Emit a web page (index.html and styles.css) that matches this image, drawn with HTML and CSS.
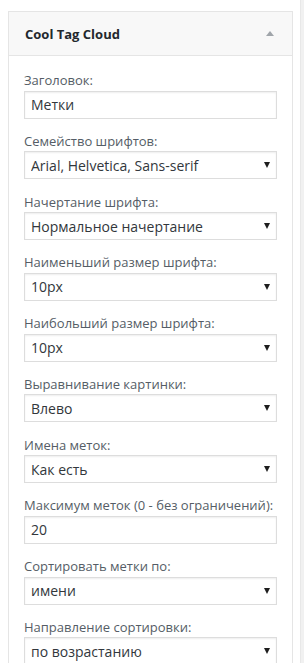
FILE: index.html
```html
<!DOCTYPE html>
<html lang="ru">
<head>
<meta charset="utf-8">
<title>Cool Tag Cloud</title>
<link rel="stylesheet" href="styles.css">
</head>
<body>
<div class="page">
  <div class="widget">
    <div class="widget-top">
      <h3 class="widget-title">Cool Tag Cloud</h3>
      <span class="toggle"></span>
    </div>
    <div class="widget-inside">
      <div class="field">
        <label class="lbl">Заголовок:</label>
        <input class="ctl text" type="text" value="Метки">
      </div>
      <div class="field">
        <label class="lbl">Семейство шрифтов:</label>
        <span class="sel"><select class="ctl"><option>Arial, Helvetica, Sans-serif</option></select></span>
      </div>
      <div class="field">
        <label class="lbl">Начертание шрифта:</label>
        <span class="sel"><select class="ctl"><option>Нормальное начертание</option></select></span>
      </div>
      <div class="field">
        <label class="lbl">Наименьший размер шрифта:</label>
        <span class="sel"><select class="ctl"><option>10px</option></select></span>
      </div>
      <div class="field">
        <label class="lbl">Наибольший размер шрифта:</label>
        <span class="sel"><select class="ctl"><option>10px</option></select></span>
      </div>
      <div class="field">
        <label class="lbl">Выравнивание картинки:</label>
        <span class="sel"><select class="ctl"><option>Влево</option></select></span>
      </div>
      <div class="field">
        <label class="lbl">Имена меток:</label>
        <span class="sel"><select class="ctl"><option>Как есть</option></select></span>
      </div>
      <div class="field">
        <label class="lbl">Максимум меток (0 - без ограничений):</label>
        <input class="ctl text" type="text" value="20">
      </div>
      <div class="field">
        <label class="lbl">Сортировать метки по:</label>
        <span class="sel"><select class="ctl"><option>имени</option></select></span>
      </div>
      <div class="field">
        <label class="lbl">Направление сортировки:</label>
        <span class="sel"><select class="ctl"><option>по возрастанию</option></select></span>
      </div>
    </div>
  </div>
  <div class="strip"></div>
</div>
</body>
</html>
```
FILE: styles.css
```css
html, body {
  margin: 0;
  padding: 0;
  background: #fff;
}
body {
  font-family: "Open Sans", "Noto Sans", sans-serif;
  font-size: 13px;
  color: #444;
  overflow: hidden;
  height: 663px;
}
.page {
  display: flex;
  height: 663px;
}
.widget {
  margin: 11px 0 0 8px;
  width: 285px;
  box-sizing: border-box;
  border: 1px solid #e5e5e5;
  border-bottom: none;
  background: #fff;
  flex: none;
}
.widget-top {
  height: 43px;
  background: #f8f8f8;
  border-bottom: 1px solid #e5e5e5;
  display: flex;
  align-items: center;
  justify-content: space-between;
  padding: 0 18px 0 16px;
}
.widget-title {
  margin: 0;
  font-size: 13px;
  font-weight: 700;
  color: #23282d;
}
.toggle {
  width: 0;
  height: 0;
  border-left: 4px solid transparent;
  border-right: 4px solid transparent;
  border-bottom: 5px solid #a0a5aa;
}
.widget-inside {
  padding: 15px 15px 0;
}
.field {
  margin-bottom: 13.28px;
}
.lbl {
  display: block;
  line-height: 19.5px;
  color: #555d66;
}
.ctl {
  display: block;
  width: 100%;
  height: 28px;
  box-sizing: border-box;
  margin: 0;
  border: 1px solid #ddd;
  background: #fff;
  box-shadow: inset 0 1px 2px rgba(0, 0, 0, 0.07);
  font-family: "Open Sans", "Noto Sans", sans-serif;
  font-size: 14px;
  color: #32373c;
  border-radius: 0;
  outline: none;
}
.text {
  padding: 0 6px;
}
.sel {
  display: block;
  position: relative;
}
.sel select {
  -webkit-appearance: none;
  appearance: none;
  padding: 0 20px 0 6px;
}
.sel::after {
  content: "";
  position: absolute;
  right: 7px;
  top: 11px;
  width: 0;
  height: 0;
  border-left: 3.5px solid transparent;
  border-right: 3.5px solid transparent;
  border-top: 6px solid #1e1e1e;
  pointer-events: none;
}
.strip {
  margin-left: auto;
  width: 3px;
  height: 663px;
  background: #f1f1f1;
  border-left: 1px solid #e8e8e8;
}
```
